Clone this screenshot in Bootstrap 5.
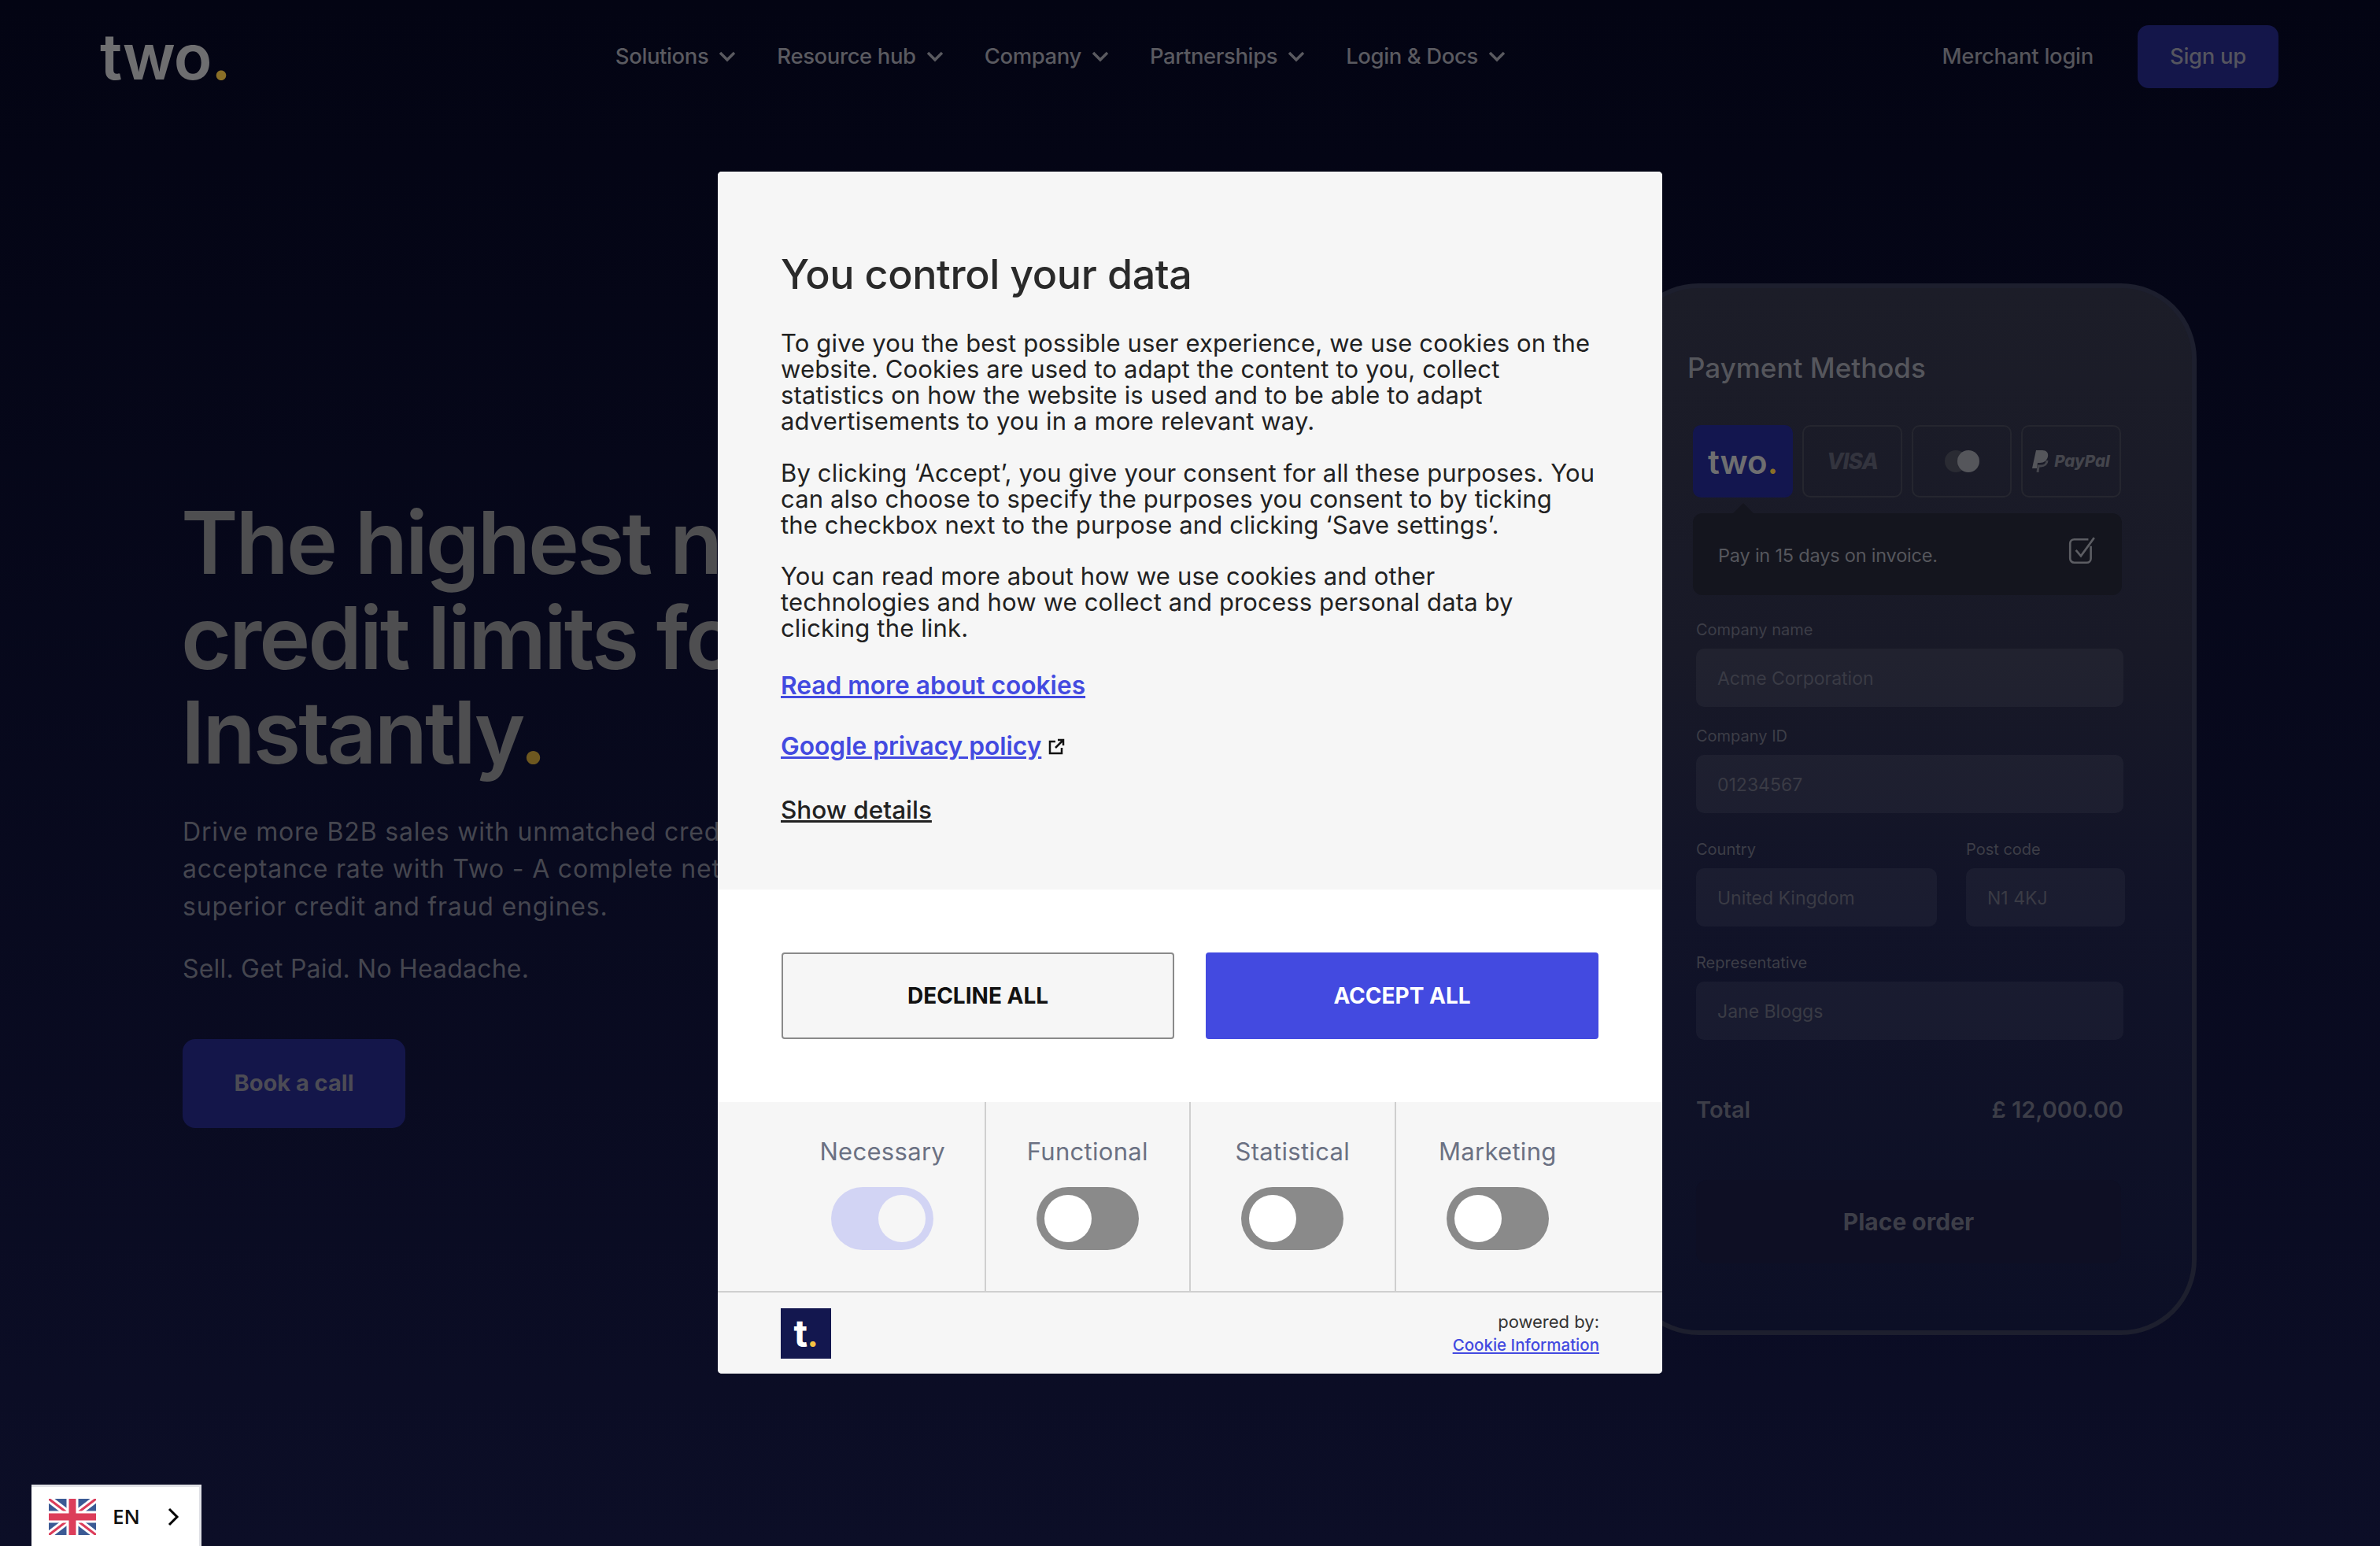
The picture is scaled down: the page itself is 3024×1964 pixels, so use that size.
<!DOCTYPE html>
<html lang="en">
<head>
  <meta charset="UTF-8">
  <title>Two - B2B payments</title>
  <link href="https://cdn.jsdelivr.net/npm/bootstrap@5.3.3/dist/css/bootstrap.min.css" rel="stylesheet">
  <style>
    html, body { height: 100%; }
    body {
      font-family: "Inter", "Liberation Sans", sans-serif;
      background: linear-gradient(180deg, #030413 0%, #0c0e27 100%);
      overflow: hidden;
      position: relative;
    }
    /* page behind the dialog */
    .top-bar { height: 144px; padding: 32px 129px 32px 127px; }
    .brand-word { font-size: 80px; font-weight: 600; line-height: 80px; letter-spacing: -1px; color: #6e6e70; }
    .dot-gold { color: #8a6f27; }
    .dot-dim { color: #6e5820; }
    .main-links { margin-left: 489px; gap: 52px; }
    .main-link { font-size: 27.5px; font-weight: 500; color: #5a5a60; letter-spacing: -.4px; gap: 13px; }
    .main-link svg { width: 22px; height: 14px; }
    .merchant-link { font-size: 27.5px; font-weight: 500; color: #55555b; letter-spacing: -.3px; margin-right: 56px; }
    .signup-btn {
      width: 179px; height: 80px; background: #14164a; color: #55555f; border-radius: 14px;
      font-size: 27.5px; font-weight: 500; letter-spacing: -.3px;
    }
    .hero-col { padding: 485px 0 0 232px; white-space: nowrap; }
    .hero-title { font-size: 110px; line-height: 120.5px; font-weight: 600; color: #4e4e50; margin: 0 0 42px -2px; letter-spacing: -3px; }
    .hero-copy { font-size: 32px; line-height: 47.5px; color: #45464f; margin: 0 0 32px; letter-spacing: .8px; }
    .hero-tag { letter-spacing: .2px; }
    .book-btn {
      width: 283px; height: 113px; margin-top: 65px; background: #14164a; color: #4c4c55;
      border-radius: 16px; font-size: 29px; font-weight: 700;
    }

    /* phone mock-up */
    .phone-frame {
      position: absolute; left: 2062px; top: 360px; width: 729px; height: 1336px;
      border: 6px solid #1d1f2e; border-radius: 96px;
      background: linear-gradient(180deg, #1c1d28 0%, #181927 35%, #111328 60%, #0c0f26 100%);
      padding: 78px 0 0 87px;
    }
    .pay-title { font-size: 35px; line-height: 46px; font-weight: 500; color: #55565c; margin: 0 0 50px -11px; }
    .pay-tiles { gap: 12px; margin-left: -4px; width: 545px; }
    .pay-tile {
      width: 127px; height: 92px; border: 2px solid #25262f; border-radius: 10px;
      color: #33343e;
    }
    .pay-tile-two { background: #13164f; border-color: #13164f; color: #6e6e70; font-size: 42px; font-weight: 600; }
    .visa-word { font-size: 28px; font-weight: 800; font-style: italic; letter-spacing: -1px; }
    .paypal-word { font-size: 20.5px; font-weight: 800; font-style: italic; color: #44454c; margin-left: 7px; }
    .invoice-box {
      position: relative; width: 545px; height: 104px; margin: 20px 0 0 -4px; padding: 0 32px;
      background: #14151e; border-radius: 12px; color: #56575d; font-size: 23.5px; letter-spacing: -.2px;
    }
    .invoice-box span { padding-top: 4px; }
    .invoice-box svg { margin-top: -8px; }
    .invoice-box::before {
      content: ""; position: absolute; left: 50px; top: -13px;
      border: 14px solid transparent; border-top: 0; border-bottom-color: #14151e;
    }
    .field-label { font-size: 20px; line-height: 24px; color: #3d3e47; margin: 0 0 12px; }
    .field-box {
      height: 74px; width: 543px; padding: 2px 27px 0; background: rgba(255, 255, 255, .04); border-radius: 10px;
      font-size: 23px; color: #3a3b45;
    }
    .field-first { margin-top: 32px; }
    .gap-small { margin-top: 25px; }
    .gap-wide { margin-top: 34px; }
    .field-country { width: 306px; }
    .field-post { width: 202px; }
    .field-pair { gap: 37px; }
    .total-row { width: 543px; margin-top: 69px; font-size: 29px; line-height: 40px; font-weight: 600; color: #3d3e48; }
    .order-btn {
      width: 540px; height: 106px; margin-top: 69px; background: #0e0f24; border-radius: 14px;
      font-size: 30px; font-weight: 700; color: #3d3e48;
    }

    /* consent dialog */
    .consent-box {
      top: 218px; width: 1200px; height: 1527px; background: #fff; border-radius: 5px; overflow: hidden;
      font-size: 31px; color: #212121; z-index: 10;
    }
    .consent-body { height: 912px; padding: 101px 80px 0; background: #f6f6f6; }
    .consent-title { font-size: 52px; line-height: 60px; font-weight: 500; color: #2a2a2a; margin: 0 0 40px; letter-spacing: -.4px; }
    .consent-copy { line-height: 33px; margin: 0 0 32.5px; letter-spacing: .15px; white-space: nowrap; }
    .link-row { line-height: 36px; }
    .consent-link { font-size: 31.7px; font-weight: 600; color: #434ae0; }
    .consent-link-plain { font-size: 31.5px; font-weight: 500; color: #212121; }
    .link-row-one { margin-top: 38.5px; }
    .link-row-two { margin-top: 41px; }
    .link-row-three { margin-top: 45px; }
    .ext-icon { width: 22px; height: 22px; margin-left: 8px; vertical-align: -1px; }
    .consent-actions { height: 270px; padding: 80px 81px 0; gap: 40px; }
    .action-btn {
      flex: 1 1 0; height: 110px; border-radius: 4px; font-size: 28px; font-weight: 700;
    }
    .action-decline { background: #f6f6f6; border: 2px solid #8a8a8a; color: #111; }
    .action-accept { background: #434ae0; border: 2px solid #434ae0; color: #fff; }
    .consent-types { height: 242px; padding: 0 80px; background: #f6f6f6; border-bottom: 2px solid #cfcfcf; }
    .type-col { flex: 1 1 0; padding-top: 45px; border-left: 2px solid #cfcfcf; }
    .type-col:first-child { border-left: 0; }
    .type-name { font-size: 31px; line-height: 36px; color: #6b7183; margin-bottom: 27px; letter-spacing: .3px; }
    .type-switch { width: 130px; height: 80px; border-radius: 40px; background: #8a8a8a; padding: 10px; }
    .type-switch span { display: block; width: 60px; height: 60px; border-radius: 50%; background: #fff; }
    .type-switch-locked { background: #d2d4f4; }
    .type-switch-locked span { background: #f6f6f6; margin-left: auto; }
    .consent-foot { height: 105px; padding: 20px 80px 0; background: #f6f6f6; }
    .foot-logo { width: 64px; height: 64px; background: #13174f; color: #fff; font-size: 48px; font-weight: 700; line-height: 64px; }
    .foot-logo b { color: #f5c242; font-size: 36px; }
    .foot-copy { padding-top: 2px; }
    .foot-power { font-size: 22px; line-height: 30px; color: #333; }
    .foot-link { font-size: 20.5px; line-height: 30px; font-weight: 500; color: #434ae0; }

    /* language switch */
    .lang-pick {
      position: fixed; left: 40px; bottom: 0; width: 216px; height: 78px; background: #fff;
      border: 3px solid #dfe0e5; border-width: 3px 3px 0 0; padding-left: 22px;
      font-family: "Open Sans", sans-serif; font-size: 26px; font-weight: 600; color: #111;
    }
    .lang-flag { width: 60px; height: 46px; margin-right: 21px; }
    .lang-chevron { width: 16px; height: 24px; margin-left: 34px; }
  </style>
</head>
<body>

<header class="top-bar d-flex align-items-center">
  <div class="brand-word">two<span class="dot-gold">.</span></div>
  <nav class="main-links d-flex">
    <a class="main-link d-flex align-items-center text-decoration-none">Solutions <svg viewBox="0 0 22 14" fill="none" stroke="#5a5a60" stroke-width="3.5"><path d="M2 2l9 9 9-9"/></svg></a>
    <a class="main-link d-flex align-items-center text-decoration-none">Resource hub <svg viewBox="0 0 22 14" fill="none" stroke="#5a5a60" stroke-width="3.5"><path d="M2 2l9 9 9-9"/></svg></a>
    <a class="main-link d-flex align-items-center text-decoration-none">Company <svg viewBox="0 0 22 14" fill="none" stroke="#5a5a60" stroke-width="3.5"><path d="M2 2l9 9 9-9"/></svg></a>
    <a class="main-link d-flex align-items-center text-decoration-none">Partnerships <svg viewBox="0 0 22 14" fill="none" stroke="#5a5a60" stroke-width="3.5"><path d="M2 2l9 9 9-9"/></svg></a>
    <a class="main-link d-flex align-items-center text-decoration-none">Login &amp; Docs <svg viewBox="0 0 22 14" fill="none" stroke="#5a5a60" stroke-width="3.5"><path d="M2 2l9 9 9-9"/></svg></a>
  </nav>
  <div class="ms-auto d-flex align-items-center">
    <a class="merchant-link text-decoration-none">Merchant login</a>
    <a class="signup-btn d-flex align-items-center justify-content-center text-decoration-none">Sign up</a>
  </div>
</header>

<main class="hero-col">
  <h1 class="hero-title">The highest net terms<br>credit limits for B2B<br>Instantly<span class="dot-dim">.</span></h1>
  <p class="hero-copy">Drive more B2B sales with unmatched credit limits and the highest<br>acceptance rate with Two - A complete net terms solution with<br>superior credit and fraud engines.</p>
  <p class="hero-copy hero-tag">Sell. Get Paid. No Headache.</p>
  <a class="book-btn d-flex align-items-center justify-content-center text-decoration-none">Book a call</a>
</main>

<section class="phone-frame">
  <h2 class="pay-title">Payment Methods</h2>
  <div class="pay-tiles d-flex">
    <div class="pay-tile pay-tile-two d-flex align-items-center justify-content-center">two<span class="dot-gold">.</span></div>
    <div class="pay-tile d-flex align-items-center justify-content-center"><span class="visa-word">VISA</span></div>
    <div class="pay-tile d-flex align-items-center justify-content-center">
      <svg width="44" height="28" viewBox="0 0 44 28"><circle cx="14" cy="14" r="14" fill="#2a2b33"/><circle cx="30" cy="14" r="14" fill="#55565b"/></svg>
    </div>
    <div class="pay-tile d-flex align-items-center justify-content-center">
      <svg width="21" height="28" viewBox="0 0 21 28"><path d="M5 0h8c5 0 8 3 7 8s-5 8-10 8H7l-1 7H0z" fill="#55565b"/><path d="M7 28l1-8h3c5 0 8-3 8-7" fill="none" stroke="#44454c" stroke-width="3"/></svg>
      <span class="paypal-word">PayPal</span>
    </div>
  </div>
  <div class="invoice-box d-flex align-items-center justify-content-between">
    <span>Pay in 15 days on invoice.</span>
    <svg width="38" height="38" viewBox="0 0 36 36" fill="none" stroke="#5c5d63" stroke-width="2.5"><path d="M29 12v15a5 5 0 0 1-5 5H9a5 5 0 0 1-5-5V9a5 5 0 0 1 5-5h17"/><path d="M11 17l6 7L33 2"/></svg>
  </div>

  <div class="field-first"><p class="field-label">Company name</p><div class="field-box d-flex align-items-center">Acme Corporation</div></div>
  <div class="gap-small"><p class="field-label">Company ID</p><div class="field-box d-flex align-items-center">01234567</div></div>
  <div class="gap-wide d-flex field-pair">
    <div><p class="field-label">Country</p><div class="field-box field-country d-flex align-items-center">United Kingdom</div></div>
    <div><p class="field-label">Post code</p><div class="field-box field-post d-flex align-items-center">N1 4KJ</div></div>
  </div>
  <div class="gap-wide"><p class="field-label">Representative</p><div class="field-box d-flex align-items-center">Jane Bloggs</div></div>
  <div class="total-row d-flex justify-content-between"><span>Total</span><span>£ 12,000.00</span></div>
  <div class="order-btn d-flex align-items-center justify-content-center">Place order</div>
</section>

<div class="consent-box position-absolute start-50 translate-middle-x">
  <div class="consent-body">
    <h2 class="consent-title">You control your data</h2>
    <p class="consent-copy">To give you the best possible user experience, we use cookies on the<br>website. Cookies are used to adapt the content to you, collect<br>statistics on how the website is used and to be able to adapt<br>advertisements to you in a more relevant way.</p>
    <p class="consent-copy">By clicking ‘Accept’, you give your consent for all these purposes. You<br>can also choose to specify the purposes you consent to by ticking<br>the checkbox next to the purpose and clicking ‘Save settings’.</p>
    <p class="consent-copy">You can read more about how we use cookies and other<br>technologies and how we collect and process personal data by<br>clicking the link.</p>
    <div class="link-row link-row-one"><a class="consent-link" href="#">Read more about cookies</a></div>
    <div class="link-row link-row-two"><a class="consent-link" href="#">Google privacy policy</a><svg class="ext-icon" viewBox="0 0 22 22" fill="none" stroke="#111" stroke-width="2.5"><path d="M10 4H3v15h15v-7"/><path d="M10 12L20 2M13 2h7v7"/></svg></div>
    <div class="link-row link-row-three"><a class="consent-link-plain" href="#">Show details</a></div>
  </div>
  <div class="consent-actions d-flex">
    <button type="button" class="action-btn action-decline">DECLINE ALL</button>
    <button type="button" class="action-btn action-accept">ACCEPT ALL</button>
  </div>
  <div class="consent-types d-flex">
    <div class="type-col d-flex flex-column align-items-center"><div class="type-name">Necessary</div><div class="type-switch type-switch-locked"><span></span></div></div>
    <div class="type-col d-flex flex-column align-items-center"><div class="type-name">Functional</div><div class="type-switch"><span></span></div></div>
    <div class="type-col d-flex flex-column align-items-center"><div class="type-name">Statistical</div><div class="type-switch"><span></span></div></div>
    <div class="type-col d-flex flex-column align-items-center"><div class="type-name">Marketing</div><div class="type-switch"><span></span></div></div>
  </div>
  <div class="consent-foot d-flex justify-content-between">
    <div class="foot-logo text-center">t<b>.</b></div>
    <div class="foot-copy text-end">
      <div class="foot-power">powered by:</div>
      <a class="foot-link d-block" href="#">Cookie Information</a>
    </div>
  </div>
</div>

<div class="lang-pick d-flex align-items-center">
  <svg class="lang-flag" viewBox="0 0 60 46">
    <rect width="60" height="46" fill="#3b5a94"/>
    <path d="M0 0l60 46M60 0L0 46" stroke="#fff" stroke-width="9"/>
    <path d="M0 0l60 46M60 0L0 46" stroke="#dc3d5a" stroke-width="3"/>
    <path d="M30 0v46M0 23h60" stroke="#fff" stroke-width="15"/>
    <path d="M30 0v46M0 23h60" stroke="#dc3d5a" stroke-width="9"/>
  </svg>
  <span>EN</span>
  <svg class="lang-chevron" viewBox="0 0 16 24" fill="none" stroke="#000" stroke-width="3"><path d="M3 2l10 10L3 22"/></svg>
</div>

<script src="https://cdn.jsdelivr.net/npm/bootstrap@5.3.3/dist/js/bootstrap.bundle.min.js"></script>
</body>
</html>
